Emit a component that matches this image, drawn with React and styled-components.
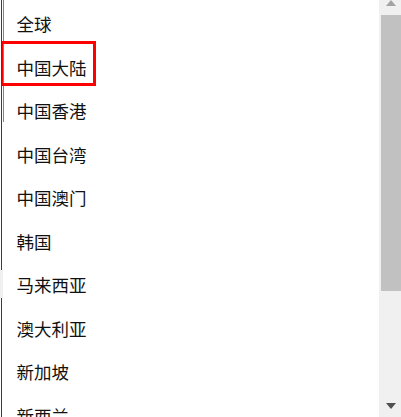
import React from "react";
import styled, { createGlobalStyle } from "styled-components";

const GlobalStyle = createGlobalStyle`
    html, body {
        margin: 0;
        padding: 0;
        background: #ffffff;
    }
    body {
        font-family: "Noto Sans CJK SC", "Noto Sans", sans-serif;
    }
`

const Frame = styled.div`
    position: relative;
    display: flex;
    width: 401px;
    height: 417px;
    overflow: hidden;
    background: #ffffff;

    &::before {
        content: "";
        position: absolute;
        left: 0;
        top: 270px;
        width: 3px;
        height: 28px;
        background: #f0f0f0;
        z-index: 2;
    }
`

const Content = styled.div`
    position: relative;
    flex: 1;
    margin-left: 1px;
    border-left: 1px solid #3c3c3c;
    overflow: hidden;

    &::before {
        content: "";
        position: absolute;
        left: 1px;
        top: 0;
        width: 1px;
        height: 122px;
        background: #d86a2e;
    }
`

const List = styled.ul`
    list-style: none;
    margin: 0;
    padding: 2px 0 0 0;
`

const Item = styled.li`
    position: relative;
    display: flex;
    align-items: center;
    height: 43.5px;
    padding-left: 14.5px;
    font-size: 17.5px;
    color: #111111;

    &::after {
        content: "";
        display: ${p => (p.$selected ? "block" : "none")};
        position: absolute;
        left: -2px;
        top: -4.5px;
        width: 96px;
        height: 45px;
        box-sizing: border-box;
        border: 3px solid #ff0000;
        z-index: 3;
    }
`

const ScrollBar = styled.div`
    display: flex;
    flex-direction: column;
    width: 22px;
    background: #f0f0f0;
`

const ArrowButton = styled.div`
    display: flex;
    justify-content: center;
    align-items: flex-start;
    height: ${p => p.$height}px;
    padding-top: ${p => p.$offset}px;
    box-sizing: border-box;
    padding-left: 2px;
`

const Arrow = styled.div`
    width: 0;
    height: 0;
    border-left: 5.5px solid transparent;
    border-right: 5.5px solid transparent;
    ${p => p.$up
        ? `border-bottom: 6px solid ${p.$color};`
        : `border-top: 6px solid ${p.$color};`}
`

const Track = styled.div`
    flex: 1;
    padding-left: 2px;
`

const Thumb = styled.div`
    height: 276px;
    background: #c1c1c1;
`

const regions = [
    "全球",
    "中国大陆",
    "中国香港",
    "中国台湾",
    "中国澳门",
    "韩国",
    "马来西亚",
    "澳大利亚",
    "新加坡",
    "新西兰",
    "泰国",
    "日本",
]

const App = () => {
    return (
        <>
            <GlobalStyle />
            <Frame>
                <Content>
                    <List>
                        {regions.map((name, index) => (
                            <Item key={name} $selected={index === 1}>
                                {name}
                            </Item>
                        ))}
                    </List>
                </Content>
                <ScrollBar>
                    <ArrowButton $height={15} $offset={0}>
                        <Arrow $up $color="#a3a3a3" />
                    </ArrowButton>
                    <Track>
                        <Thumb />
                    </Track>
                    <ArrowButton $height={20} $offset={6}>
                        <Arrow $color="#505050" />
                    </ArrowButton>
                </ScrollBar>
            </Frame>
        </>
    )
}

export default App;
